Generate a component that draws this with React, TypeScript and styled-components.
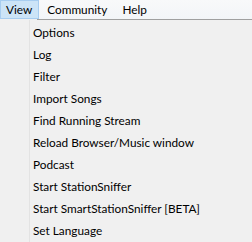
import React from 'react'
import styled, { createGlobalStyle } from 'styled-components'

const GlobalStyle = createGlobalStyle`
  html, body {
    margin: 0;
    padding: 0;
    background: #f0f0f0;
  }
  body {
    font-family: Lato, "Noto Sans", sans-serif;
    font-size: 11.8px;
    color: #000;
  }
`

const Window = styled.div`
  width: 252px;
  height: 242px;
  overflow: hidden;
  background: #f0f0f0;
`

const MenuBar = styled.div`
  display: flex;
  height: 19px;
  background: linear-gradient(#f8f9fa, #f3f5f8);
`

const MenuTitle = styled.div<{ active?: boolean }>`
  box-sizing: border-box;
  height: 19px;
  padding: 0 6px 0 5px;
  margin-right: 2px;
  display: flex;
  align-items: center;
  line-height: 19px;
  border: 1px solid ${p => (p.active ? '#a7cdf0' : 'transparent')};
  background: ${p => (p.active ? '#cce4f7' : 'transparent')};
`

const Body = styled.div`
  display: flex;
  height: 223px;
`

const Dropdown = styled.div`
  display: flex;
  flex: 1;
  position: relative;
  border-top: 1px solid #a0a0a0;
`

const TopGap = styled.div`
  position: absolute;
  left: 0;
  top: -1px;
  width: 37px;
  height: 1px;
  background: #f0f0f0;
`

const Gutter = styled.div`
  width: 29px;
  border-right: 1px solid #e3e3e3;
  flex-shrink: 0;
`

const Items = styled.ul`
  list-style: none;
  margin: 0;
  padding: 2px 0 0 3px;
  flex: 1;
`

const Item = styled.li`
  height: 22px;
  line-height: 22px;
  white-space: nowrap;
`

const items = [
  'Options',
  'Log',
  'Filter',
  'Import Songs',
  'Find Running Stream',
  'Reload Browser/Music window',
  'Podcast',
  'Start StationSniffer',
  'Start SmartStationSniffer [BETA]',
  'Set Language',
]

export default function App() {
  return (
    <Window>
      <GlobalStyle />
      <MenuBar>
        <MenuTitle active>View</MenuTitle>
        <MenuTitle>Community</MenuTitle>
        <MenuTitle>Help</MenuTitle>
      </MenuBar>
      <Body>
        <Dropdown>
          <TopGap />
          <Gutter />
          <Items>
            {items.map(label => (
              <Item key={label}>{label}</Item>
            ))}
          </Items>
        </Dropdown>
      </Body>
    </Window>
  )
}
